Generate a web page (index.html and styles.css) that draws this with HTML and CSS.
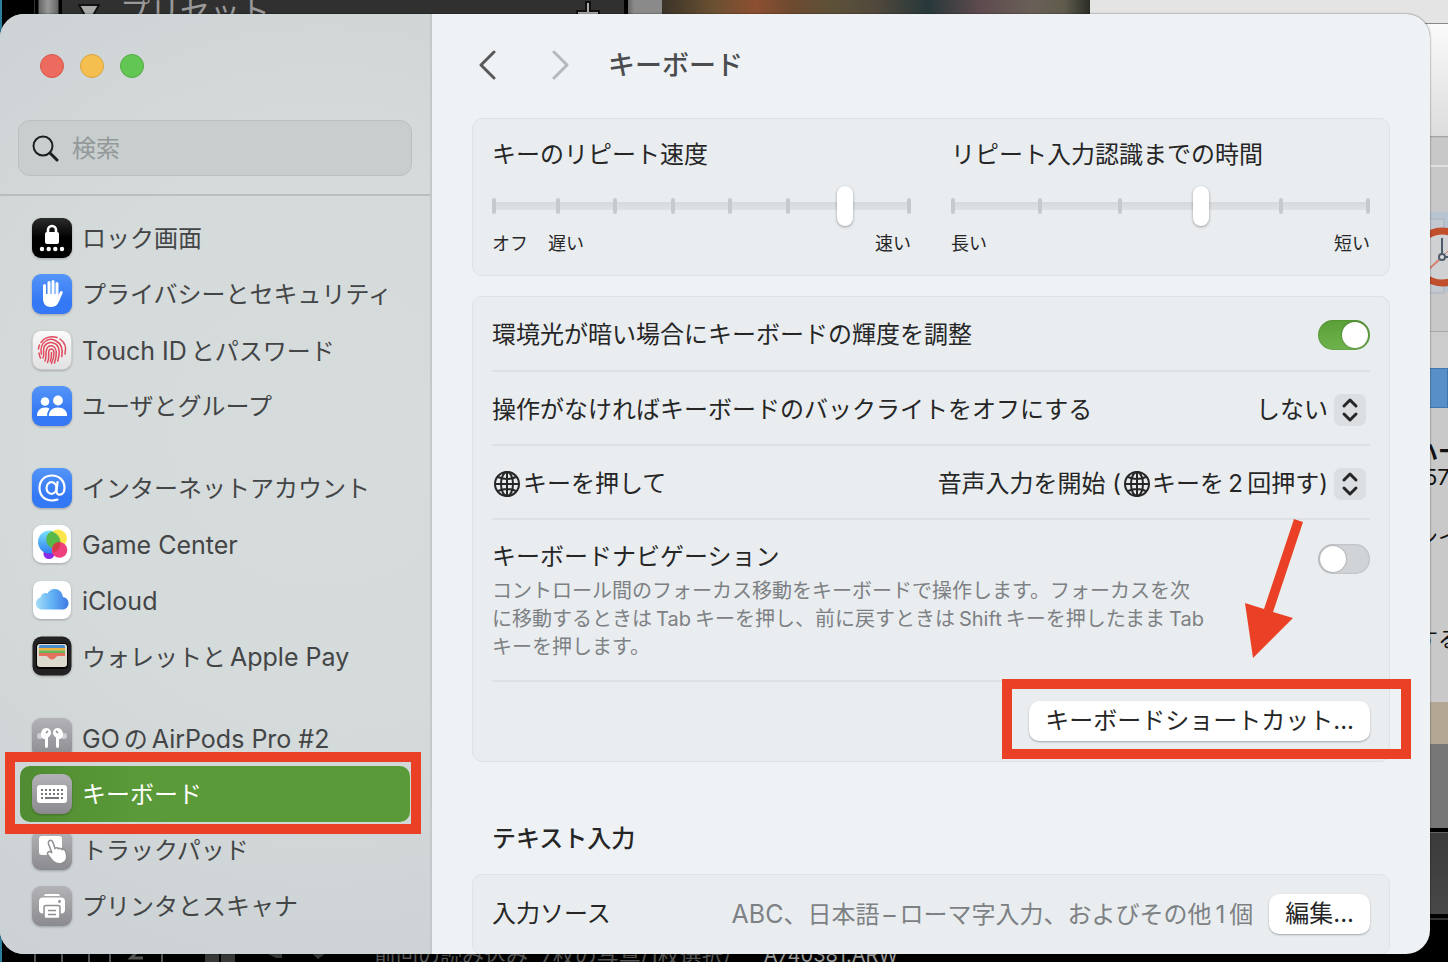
FILE: index.html
```
<!DOCTYPE html>
<html lang="ja">
<head>
  <meta charset="UTF-8" />
  <meta name="viewport" content="width=device-width, initial-scale=1.0"/>
  <title>キーボード</title>
  <link rel="stylesheet" href="styles.css">
</head>
<body>
  <svg width="0" height="0" class="defs" aria-hidden="true">
    <defs>
      <linearGradient id="blue" x1="0" y1="0" x2="0" y2="1"><stop offset="0" stop-color="#5495f7"/><stop offset=".7" stop-color="#3478f6"/></linearGradient>
      <linearGradient id="grey" x1="0" y1="0" x2="0" y2="1"><stop offset="0" stop-color="#b3b2b7"/><stop offset="1" stop-color="#8b8a8f"/></linearGradient>
      <linearGradient id="black" x1="0" y1="0" x2="0" y2="1"><stop offset="0" stop-color="#2c2c2c"/><stop offset=".5" stop-color="#000"/></linearGradient>
      <linearGradient id="light" x1="0" y1="0" x2="0" y2="1"><stop offset="0" stop-color="#fafafa"/><stop offset="1" stop-color="#e2e2e2"/></linearGradient>
      <linearGradient id="cloud" x1="0" y1="0" x2="1" y2="0"><stop offset="0" stop-color="#a4dcf8"/><stop offset=".5" stop-color="#61b1f3"/><stop offset="1" stop-color="#3f78e4"/></linearGradient>
      <linearGradient id="gcBlue" x1="0" y1="0" x2="0" y2="1"><stop offset="0" stop-color="#7be3fb"/><stop offset="1" stop-color="#2f7df0"/></linearGradient>
      <symbol id="globe" viewBox="0 0 26 26">
        <g fill="none" stroke="#262626" stroke-width="2">
          <circle cx="13" cy="13" r="12"/>
          <ellipse cx="13" cy="13" rx="6" ry="12"/>
          <path d="M13 1v24M1 13h24M4 6q9 4 18 0M4 20q9-4 18 0"/>
        </g>
      </symbol>
      <symbol id="updown" viewBox="0 0 32 32">
        <path d="M10 12l6-6 6 6M10 20l6 6 6-6" fill="none" stroke="#262626" stroke-width="3" stroke-linecap="round" stroke-linejoin="round"/>
      </symbol>
    </defs>
  </svg>

  <!-- windows behind -->
  <div class="desktop" aria-hidden="true">
    <div class="app-panel">
      <span class="app-title">プリセット</span>
      <svg class="app-arrow" width="22" height="16" viewBox="0 0 22 16"><path d="M1 1h20l-8 14h-4z" fill="#aaa" stroke="#111" stroke-width="2"/></svg>
      <svg class="app-plus" width="24" height="24" viewBox="0 0 24 24"><path d="M10 1h4v9h9v4h-9v9h-4v-9H1v-4h9z" fill="#aaa" stroke="#111" stroke-width="2"/></svg>
    </div>
    <div class="app-photo"></div>
    <div class="app-status">
      <svg width="340" height="12" viewBox="0 0 340 12"><path d="M15 0v12M42 0v12M69 0v12M90 0v12M142 0v12" stroke="#555" stroke-width="2"/><path d="M185 2h14v10h-14zM201 2h14v10h-14zM240 0h22v8h-6zM288 0h22l-12 9z" fill="#383838"/><path d="M119 0l-8 8h12" stroke="#555" stroke-width="3" fill="none"/></svg>
      <span>前回の読み込み&nbsp; 7枚の写真/1枚選択/</span>
      <span class="file">A740381.ARW</span>
      <span>_</span>
    </div>
    <div class="finder">
      <div class="finder-head"></div>
      <div class="finder-bar"></div>
      <div class="finder-icons">
        <svg width="80" height="84" viewBox="0 0 80 84"><path d="M0 0h80v80H0z" fill="#b9c4d2"/><path d="M0 7h54v74H0z" fill="#c3c9d0" stroke="#aab2bc"/><circle cx="52" cy="45" r="26" fill="#d0d1d2" stroke="#c24f2c" stroke-width="7"/><path d="M52 45L38 58" stroke="#d4806d" stroke-width="2"/><path d="M52 45l14-14" stroke="#d4806d"/><path d="M52 26v19h20" stroke="#4c5c6a" stroke-width="2" fill="none"/><circle cx="52" cy="45" r="3" fill="#ddd" stroke="#4c5c6a" stroke-width="2"/></svg>
      </div>
      <div class="finder-sub"></div>
      <div class="finder-selected"></div>
      <div class="finder-list">
        <b>ハー</b>
        <span>57</span>
        <span class="spaced">ンイ</span>
        <span class="last">する</span>
      </div>
      <div class="wallpaper"></div>
      <div class="dock-bar"></div>
      <div class="film-strip"></div>
      <div class="film-base"></div>
    </div>
  </div>

  <div class="window">
    <aside class="sidebar">
      <div class="lights">
        <button class="light close" aria-label="閉じる"></button>
        <button class="light minimize" aria-label="しまう"></button>
        <button class="light full" aria-label="フルスクリーン"></button>
      </div>
      <div class="search">
        <svg width="28" height="28" viewBox="0 0 28 28"><circle cx="12" cy="12" r="9.500" fill="none" stroke="#1c1e1f" stroke-width="2"/><path d="M19 19l7 7" stroke="#1c1e1f" stroke-width="3" stroke-linecap="round"/></svg>
        <input type="text" placeholder="検索" aria-label="検索">
      </div>
      <nav>
        <ul>
          <li><a href="#">
            <svg class="icon" viewBox="0 0 40 40"><rect width="40" height="40" rx="9" fill="url(#black)"/><path d="M16 16v-4a4 4 0 018 0v4" fill="none" stroke="#fff" stroke-width="2.6"/><rect x="13" y="14" width="14" height="12" rx="2" fill="#fff"/><g fill="#fff"><circle cx="10" cy="31" r="2.2"/><circle cx="16.700" cy="31" r="2.2"/><circle cx="23.300" cy="31" r="2.2"/><circle cx="30" cy="31" r="2.2"/></g></svg>
            ロック画面</a></li>
          <li><a href="#">
            <svg class="icon" viewBox="0 0 40 40"><rect width="40" height="40" rx="9" fill="url(#blue)"/><g fill="none" stroke="#fff" stroke-width="3" stroke-linecap="round"><path d="M12.500 11.500V24M17 8.500V22M21 7.500V22M25 9.500V23"/><path d="M29.300 18.500L26 26"/></g><path d="M11 20h15.500v4l1.500-1c-1 6-3 10-9 10s-8-4-8-9z" fill="#fff"/></svg>
            プライバシーとセキュリティ</a></li>
          <li><a href="#">
            <svg class="icon" viewBox="0 0 40 40"><rect x=".5" y=".5" width="39" height="39" rx="9" fill="url(#light)" stroke="#cfcfcf" stroke-width=".6"/><g fill="none" stroke="#e0485c" stroke-width="1.500" stroke-linecap="round"><path d="M9 12.500C12 7.500 19 5.500 25 7.500M28 9c5 3.500 6.500 9 5 15M6.500 19c0-2 .5-3 1-4M7 23c.500 3 .500 2 1.500 5"/><path d="M9.300 24c-2-13 8-16.500 14-13.500 5 2.500 8 8 6.500 16M11 28c2-3-1-8 1.500-12 4-5.500 12-4 14 2 1 3 .7 8-.8 13"/><path d="M13 31c2.500-5-1-11 3.500-14.500 4-2 7.500 1 7.800 5 .2 4-.3 7-1.800 11.500M15.500 32.500c2.500-5 .3-9 1.500-12 1.500-2.500 5-1.500 5 2 0 4-.5 7-2.500 11M18.300 31.500c1.200-3 1.200-6 1.200-9"/></g></svg>
            <span><span class="latin">Touch ID</span><span class="gap">とパスワード</span></span></a></li>
          <li><a href="#">
            <svg class="icon" viewBox="0 0 40 40"><rect width="40" height="40" rx="9" fill="url(#blue)"/><g fill="#fff"><circle cx="13" cy="15.500" r="4.300"/><path d="M5 30c0-5.500 3.500-8.500 8-8.500 2 0 3.500.5 4.500 1.300C16 25 15 27 15.200 30z"/><circle cx="26" cy="14.500" r="4.900"/><path d="M16.800 30c0-5.500 4-8.500 9.200-8.500s9.200 3 9.200 8.500z"/></g></svg>
            ユーザとグループ</a></li>
        </ul>
        <ul>
          <li><a href="#">
            <svg class="icon" viewBox="0 0 40 40"><rect width="40" height="40" rx="9" fill="url(#blue)"/><g fill="none" stroke="#fff" stroke-width="2.200" stroke-linecap="round"><ellipse cx="19.500" cy="20" rx="5" ry="5.800"/><path d="M25.500 14l-1 8.500c-.3 3 1.500 4.500 3.500 4.200 3-.5 4.500-3.500 4.500-7C32.500 12.500 27 7.500 20 7.500c-7.500 0-12.500 5-12.500 12.500S12.500 32.500 20 32.500c2 0 4-.3 5.500-.9"/></g></svg>
            インターネットアカウント</a></li>
          <li><a href="#">
            <svg class="icon" viewBox="0 0 40 40"><rect x="1" y="1" width="38" height="38" rx="9" fill="#fff"/><circle cx="17" cy="29.500" r="5.500" fill="#8a2be8"/><circle cx="17.500" cy="18" r="11.500" fill="url(#gcBlue)"/><circle cx="26" cy="14.500" r="9" fill="#fbe33a" opacity=".9"/><path d="M19 7.500a11.500 11.500 0 018.500 16A9 9 0 0119 7.500z" fill="#57b947"/><circle cx="27.500" cy="26" r="7.800" fill="#ef3f7c"/><path d="M20.500 23a8 8 0 018-5 11.500 11.500 0 01-7 11z" fill="#d33c44"/></svg>
            <span class="latin">Game Center</span></a></li>
          <li><a href="#">
            <svg class="icon" viewBox="0 0 40 40"><rect x="1" y="1" width="38" height="38" rx="8" fill="#fff"/><path d="M10.500 29.500C6.500 29.500 4 27 4 23.500c0-3 2-5.500 4.500-6 .5-3.500 4-5.500 7-4C17 10.500 19.500 9 22.500 9c4.500 0 8 3.500 8.300 8 3.500.5 5.700 3 5.700 6.200 0 3.600-2.500 6.300-6 6.300z" fill="url(#cloud)"/></svg>
            <span class="latin">iCloud</span></a></li>
          <li><a href="#">
            <svg class="icon" viewBox="0 0 40 40"><rect x=".5" y=".5" width="39" height="39" rx="9" fill="#222"/><rect x="4" y="7" width="32" height="26" rx="4" fill="#050505"/><rect x="5" y="8" width="30" height="23" rx="3" fill="#dcd9ce"/><path d="M7 10.500q0-1.500 1.500-1.500h23q1.500 0 1.500 1.500V12H7z" fill="#4a8fcb"/><path d="M7 12h26v2.500H7z" fill="#f0b23c"/><path d="M7 14.500h26V17H7z" fill="#68b757"/><path d="M7 17h26v3h-7c-2 0-3 3.500-6 3.500S16 20 14 20H7z" fill="#e5705f"/></svg>
            <span>ウォレットと<span class="latin gap">Apple Pay</span></span></a></li>
        </ul>
        <ul>
          <li><a href="#">
            <svg class="icon" viewBox="0 0 40 40"><rect width="40" height="40" rx="9" fill="url(#grey)"/><g fill="#d0d0d3"><circle cx="8" cy="18" r="3"/><circle cx="32" cy="18" r="3"/></g><g fill="#fff"><path d="M14 10c3 0 5 2 5 5 0 1.500-1 3-3 4.500V28q0 2-1.500 2T13 28v-7c-3 0-4.500-2.500-4-5.500.5-3.200 2.300-5.500 5-5.500zM26 10c-3 0-5 2-5 5 0 1.500 1 3 3 4.500V28q0 2 1.500 2T27 28v-7c3 0 4.500-2.500 4-5.500-.5-3.200-2.300-5.500-5-5.500z"/></g><path d="M14 15l2-2M26 15l-2-2" stroke="#888" stroke-width="1.500"/></svg>
            <span><span class="latin">GO</span><span class="gap">の</span><span class="latin">AirPods Pro #2</span></span></a></li>
          <li class="marked"><a href="#" class="active" aria-current="page">
            <svg class="icon" viewBox="0 0 40 40"><rect width="40" height="40" rx="9" fill="url(#grey)"/><rect x="5" y="11" width="30" height="18" rx="3" fill="#fff"/><path d="M9 16h22M9 20h22" stroke="#77767b" stroke-width="2" stroke-dasharray="2 2"/><path d="M9 24h2M13 24h14M29 24h2" stroke="#77767b" stroke-width="2"/></svg>
            キーボード</a></li>
          <li><a href="#">
            <svg class="icon" viewBox="0 0 40 40"><rect width="40" height="40" rx="9" fill="url(#grey)"/><rect x="7" y="6" width="23" height="19" rx="3" fill="#fff"/><path d="M17 11c1.500-1.500 3.300-.5 4 1.500l2 6c1.500-1.200 3-.7 3.500.3 1.500-.9 3-.3 3.500.8 1.700-.6 3 0 3.600 1.700C36 27 35 32 29.500 33.500c-5 1-8-1.500-10-4L16 25c-1-1.500-.5-3.500 1.500-3.500 1 0 1.800.8 2.500 1.500L16.500 14c-.4-1.200-.2-2.300.5-3z" fill="#fff" stroke="#8f8e93" stroke-width="1.500"/></svg>
            トラックパッド</a></li>
          <li><a href="#">
            <svg class="icon" viewBox="0 0 40 40"><rect width="40" height="40" rx="9" fill="url(#grey)"/><path d="M12 10q0-2 2-2h12q2 0 2 2z" fill="#fff"/><rect x="7" y="11.500" width="26" height="16" rx="4" fill="#fff"/><circle cx="27.500" cy="15.500" r="1.400" fill="#8f8e93"/><rect x="12" y="19.500" width="16" height="13" rx="2" fill="#fff" stroke="#8f8e93" stroke-width="1.500"/><path d="M16 24.500h8M16 28.500h8" stroke="#8f8e93" stroke-width="1.500"/></svg>
            プリンタとスキャナ</a></li>
        </ul>
      </nav>
    </aside>

    <main>
      <header>
        <button class="nav-btn" aria-label="戻る"><svg width="20" height="30" viewBox="0 0 20 30"><path d="M16 2L3 15l13 13" fill="none" stroke="#58595b" stroke-width="3" stroke-linecap="round" stroke-linejoin="round"/></svg></button>
        <button class="nav-btn" aria-label="進む" disabled><svg width="20" height="30" viewBox="0 0 20 30"><path d="M4 2l13 13L4 28" fill="none" stroke="#b5b9bc" stroke-width="3" stroke-linecap="round" stroke-linejoin="round"/></svg></button>
        <h1>キーボード</h1>
      </header>

      <section class="card sliders">
        <div>
          <label for="repeat">キーのリピート速度</label>
          <div class="slider">
            <div class="ticks"><i></i><i></i><i></i><i></i><i></i><i></i><i></i><i></i></div>
            <input type="range" id="repeat" min="0" max="7" value="6">
          </div>
          <div class="hints"><span>オフ</span><span>遅い</span><span class="end">速い</span></div>
        </div>
        <div>
          <label for="delay">リピート入力認識までの時間</label>
          <div class="slider">
            <div class="ticks"><i></i><i></i><i></i><i></i><i></i><i></i></div>
            <input type="range" id="delay" min="0" max="5" value="3">
          </div>
          <div class="hints"><span>長い</span><span class="end">短い</span></div>
        </div>
      </section>

      <section class="card">
        <div class="row">
          <label for="ambient">環境光が暗い場合にキーボードの輝度を調整</label>
          <input type="checkbox" class="switch" id="ambient" checked>
        </div>
        <div class="row">
          <label for="backlight">操作がなければキーボードのバックライトをオフにする</label>
          <div class="popup">
            <select id="backlight"><option>しない</option></select>
            <svg class="stepper"><use href="#updown"/></svg>
          </div>
        </div>
        <div class="row">
          <label for="globeKey" class="with-globe"><svg class="globe"><use href="#globe"/></svg>キーを押して</label>
          <div class="popup">
            <select id="globeKey"><option>音声入力を開始 (&#x3000; キーを&#x2009;2&#x2009;回押す)</option></select>
            <svg class="globe inside"><use href="#globe"/></svg>
            <svg class="stepper"><use href="#updown"/></svg>
          </div>
        </div>
        <div class="row top">
          <div>
            <label for="navigation">キーボードナビゲーション</label>
            <p>コントロール間のフォーカス移動をキーボードで操作します。フォーカスを次<br>に移動するときは<span class="gap">Tab</span>キーを押し、前に戻すときは<span class="gap">Shift</span>キーを押したまま<span class="gap">Tab</span><br>キーを押します。</p>
          </div>
          <input type="checkbox" class="switch" id="navigation">
        </div>
        <div class="row right">
          <div class="shortcut">
            <button class="push">キーボードショートカット...</button>
            <svg class="arrow" width="60" height="140" viewBox="0 0 60 140"><path d="M50 0L59 3L29 93L49 99L9 139L1 84L20 90z" fill="#ea4025"/></svg>
          </div>
        </div>
      </section>

      <h2>テキスト入力</h2>
      <section class="card">
        <div class="row">
          <span>入力ソース</span>
          <div class="source">
            <span class="value"><span class="latin">ABC</span>、日本語<span class="gap">–</span>ローマ字入力、およびその他<span class="gap">1</span>個</span>
            <button class="push">編集...</button>
          </div>
        </div>
      </section>
    </main>
  </div>
</body>
</html>
```
FILE: styles.css
```
* {
  box-sizing: border-box;
}
body {
  margin: 0;
  height: 100vh;
  overflow: hidden;
  position: relative;
  background-color: #000;
  font-family: Inter, "Noto Sans CJK JP", sans-serif;
  font-size: 24px;
  line-height: 32px;
  color: #262626;
}
button, input, select {
  font: inherit;
  color: inherit;
  margin: 0;
  padding: 0;
  border: none;
  background: none;
}
h1, h2, p, ul {
  margin: 0;
  padding: 0;
  font-weight: normal;
}
.defs {
  position: absolute;
}

/* desktop behind the window */
.desktop {
  position: absolute;
  inset: 0;
  overflow: hidden;
  border-left: 2px solid #2c7f9c;
}
.app-panel {
  position: absolute;
  left: 32px;
  top: 0;
  width: 628px;
  height: 40px;
  background: linear-gradient(90deg, #333 0 1px, #000 1px 4px, #666 5px, #999 14px, #666 24px, #000 25px 28px, #303030 28px 590px, #000 590px 594px, #666 594px, #8a8a8a 600px);
}
.app-title {
  position: absolute;
  left: 86px;
  top: -5px;
  font-size: 30px;
  color: #999;
}
.app-arrow {
  position: absolute;
  left: 44px;
  top: 4px;
}
.app-plus {
  position: absolute;
  left: 542px;
  top: 1px;
}
.app-photo {
  position: absolute;
  left: 660px;
  top: 0;
  width: 428px;
  height: 40px;
  background: linear-gradient(90deg, #3a3328, #6b5032 12%, #8c4f31 22%, #6e4a30 30%, #5c5138 40%, #51483c 50%, #27383a 62%, #5d4a4e 74%, #6a5f58 86%, #5f5c4c 94%, #2a2d26);
}
.app-status {
  position: absolute;
  left: 18px;
  bottom: -6px;
  display: flex;
  align-items: flex-end;
  gap: 14px;
  font-size: 22px;
  line-height: 26px;
  color: #555;
  white-space: nowrap;
}
.app-status svg {
  margin-bottom: 6px;
}
.app-status .file {
  margin-left: 18px;
  font-size: 20px;
  color: #999;
}
.finder {
  position: absolute;
  right: 0;
  top: 0;
  bottom: 0;
  width: 358px;
  background-color: #000;
}
.finder-head {
  height: 24px;
  background-color: #e4e4e4;
  border-bottom: 1px solid #888;
}
.finder-bar {
  height: 143px;
  background: linear-gradient(#fafafa, #dcdcdc 112px, #999 112px, #c8c8c8 114px);
  border-bottom: 2px solid #e0e0e0;
}
.finder-icons {
  height: 165px;
  padding-top: 45px;
  padding-left: 300px;
  background-color: #c8c8c8;
  border-bottom: 1px solid #aaa;
}
.finder-sub {
  height: 36px;
  background-color: #ccc;
}
.finder-selected {
  height: 40px;
  background-color: #588fc8;
  border: 1px solid #3f77b1;
}
.finder-list {
  height: 294px;
  padding-top: 30px;
  padding-left: 326px;
  background-color: #c9c9c9;
  display: flex;
  flex-direction: column;
  font-size: 22px;
  line-height: 26px;
  color: #111;
  white-space: nowrap;
}
.finder-list span {
  padding-left: 8px;
}
.finder-list .spaced {
  margin-top: 34px;
  padding-left: 0;
}
.finder-list .last {
  margin-top: 76px;
  padding-left: 0;
}
.wallpaper {
  height: 42px;
  background-color: #b3a693;
}
.dock-bar {
  height: 84px;
  background-color: #777;
}
.film-strip {
  height: 82px;
  margin-top: 4px;
  background: linear-gradient(#3a3a3a, #484848);
  border-top: 1px solid #666;
}
.film-base {
  margin-top: 4px;
  border-top: 2px solid #333;
}

/* settings window */
.window {
  position: relative;
  top: 14px;
  display: flex;
  height: calc(100vh - 22px);
  margin-right: 18px;
  overflow: hidden;
  border-radius: 24px;
  background-color: #eef2f5;
  box-shadow: 0 0 2px rgba(0, 0, 0, 0.6);
}
.sidebar {
  flex: none;
  width: 432px;
  background: radial-gradient(circle at 75% 45%, #d6dcdc 0, #d5dada 45%, #cbd1d4 100%);
  border-right: 2px solid #c3c8ca;
}
.lights {
  display: flex;
  gap: 16px;
  padding: 40px 40px 42px;
}
.light {
  width: 24px;
  height: 24px;
  border-radius: 50%;
}
.close {
  background-color: #ed6a5f;
  border: 1px solid #d9544b;
}
.minimize {
  background-color: #f5bf4f;
  border: 1px solid #d9a33f;
}
.full {
  background-color: #62c655;
  border: 1px solid #50ab43;
}
.search {
  display: flex;
  align-items: center;
  gap: 13px;
  height: 56px;
  margin: 0 18px;
  padding: 0 12px;
  border: 1px solid #babfc1;
  border-radius: 12px;
  background-color: #c8cdce;
}
.search input {
  flex: 1;
  min-width: 0;
  padding-top: 2px;
  outline: none;
}
.search input::placeholder {
  color: #939899;
  opacity: 1;
}
nav {
  margin-top: 18px;
  padding-top: 14px;
  border-top: 2px solid #b9bfc1;
  color: #434546;
}
nav ul {
  list-style: none;
  padding: 0 20px;
  margin-bottom: 26px;
}
nav li {
  position: relative;
}
nav a {
  display: flex;
  align-items: center;
  gap: 10px;
  height: 56px;
  padding: 2px 12px 0;
  border-radius: 10px;
  color: inherit;
  text-decoration: none;
  white-space: nowrap;
}
nav a.active {
  background: linear-gradient(90deg, #508c31, #5a9a39 30%);
  color: #fff;
}
.icon {
  flex: none;
  width: 40px;
  height: 40px;
  margin-bottom: 2px;
  filter: drop-shadow(0 1px 1px rgba(0, 0, 0, 0.25));
}
.latin {
  font-size: 25px;
}
.gap {
  margin: 0 4px;
}
.marked {
  z-index: 1;
}
.marked::after, .shortcut::after {
  content: "";
  position: absolute;
  border: 10px solid #ea4025;
  pointer-events: none;
}
.marked::after {
  inset: -14px -11px -12px -15px;
}

main {
  flex: 1;
  min-width: 0;
  padding: 0 40px;
}
header {
  display: flex;
  align-items: center;
  height: 102px;
  margin-bottom: 2px;
}
.nav-btn {
  display: flex;
  width: 32px;
  margin-right: 40px;
  padding-left: 6px;
}
h1 {
  margin-left: -8px;
  padding-top: 2px;
  font-size: 27px;
  font-weight: 500;
  color: #4a4c4e;
}
h2 {
  margin: 61px 20px 19px;
  font-size: 24px;
  font-weight: 500;
}
.card {
  margin-bottom: 20px;
  padding: 0 19px;
  border: 1px solid #dfe2e5;
  border-radius: 10px;
  background-color: #e9edf0;
}
.sliders {
  display: grid;
  grid-template-columns: 1fr 1fr;
  gap: 40px;
  padding-top: 20px;
  padding-bottom: 19px;
}
.sliders label {
  display: block;
}
.slider {
  position: relative;
  height: 40px;
  margin: 15px 0 6px;
}
.slider input {
  position: relative;
  display: block;
  width: 100%;
  height: 40px;
  appearance: none;
}
.slider input::-webkit-slider-thumb {
  appearance: none;
  width: 16px;
  height: 40px;
  border-radius: 8px;
  background-color: #fff;
  box-shadow: 0 1px 3px rgba(0, 0, 0, 0.35);
}
.ticks {
  position: absolute;
  inset: 12px 0;
  display: flex;
  justify-content: space-between;
  padding: 0 6px;
  background: linear-gradient(#d6dadd, #dde1e4) center / 100% 8px no-repeat;
}
.ticks i, .ticks::before, .ticks::after {
  width: 4px;
  height: 16px;
  border-radius: 2px;
  background-color: #c6cacd;
}
.ticks i:first-child, .ticks i:last-child {
  visibility: hidden;
}
.ticks::before, .ticks::after {
  content: "";
  position: absolute;
}
.ticks::before {
  left: 0;
}
.ticks::after {
  right: 0;
}
.hints {
  display: flex;
  gap: 20px;
  font-size: 18px;
  line-height: 24px;
}
.hints .end {
  margin-left: auto;
}
.row {
  display: flex;
  align-items: center;
  justify-content: space-between;
  height: 74px;
  padding-top: 3px;
  border-bottom: 2px solid #dee1e4;
}
.row:first-child {
  height: 75px;
  padding-top: 2px;
}
.row:last-child {
  height: 79px;
  padding: 0 0 1px;
  border-bottom: none;
}
.row.top {
  align-items: flex-start;
  height: auto;
  padding: 21px 0 19px;
}
.row.right {
  justify-content: flex-end;
}
.row p {
  margin-top: 4px;
  font-size: 20px;
  line-height: 28px;
  color: #7e8184;
}
.top .switch {
  margin-top: 3px;
}
.switch {
  appearance: none;
  flex: none;
  width: 52px;
  height: 30px;
  padding: 2px;
  border-radius: 15px;
  background-color: #d1d4d7;
  box-shadow: inset 0 0 2px rgba(0, 0, 0, 0.25);
}
.switch::before {
  content: "";
  display: block;
  width: 26px;
  height: 26px;
  border-radius: 50%;
  background-color: #fff;
  box-shadow: 0 0 2px rgba(0, 0, 0, 0.4);
}
.switch:checked {
  background: linear-gradient(#5a9f38, #6fb34d);
}
.switch:checked::before {
  margin-left: auto;
}
.popup {
  position: relative;
}
.popup select {
  appearance: none;
  display: block;
  height: 32px;
  padding-right: 42px;
  text-align: right;
}
.stepper {
  position: absolute;
  right: 4px;
  top: 0;
  width: 32px;
  height: 32px;
  border-radius: 7px;
  background-color: #dcdfe2;
  pointer-events: none;
}
.with-globe {
  display: flex;
  align-items: center;
  gap: 3px;
  padding-left: 2px;
}
.globe {
  width: 26px;
  height: 26px;
}
.globe.inside {
  position: absolute;
  right: 220px;
  top: 3px;
  pointer-events: none;
}
.push {
  display: block;
  height: 40px;
  padding: 0 16px;
  border-radius: 10px;
  background-color: #fff;
  box-shadow: 0 1px 2px rgba(0, 0, 0, 0.3);
  white-space: nowrap;
}
.shortcut {
  position: relative;
}
.shortcut::after {
  inset: -22px -41px -18px -27px;
}
.arrow {
  position: absolute;
  right: 66px;
  bottom: 82px;
  pointer-events: none;
}
.source {
  display: flex;
  align-items: center;
  gap: 16px;
}
.value {
  color: #7e8184;
}
```
